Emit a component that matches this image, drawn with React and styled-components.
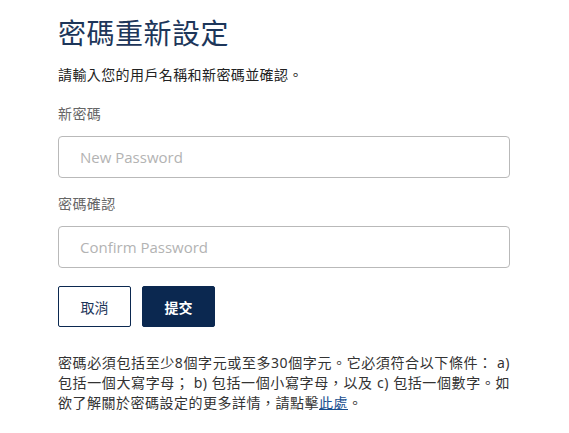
import React from "react";
import styled, { createGlobalStyle } from "styled-components";

const GlobalStyle = createGlobalStyle`
  body {
    margin: 0;
    background: #fff;
    font-family: "Noto Sans", "Noto Sans CJK TC", sans-serif;
  }
`;

const Page = styled.div`
  width: 452px;
  padding: 16px 0 0 58px;
`;

const Title = styled.h1`
  margin: 0;
  font-size: 28px;
  font-weight: 400;
  line-height: 34px;
  letter-spacing: 0.5px;
  color: #1d365a;
`;

const Intro = styled.p`
  margin: 15px 0 0;
  font-size: 14px;
  line-height: 20px;
  letter-spacing: 0.4px;
  color: #222;
`;

const Field = styled.div`
  display: flex;
  flex-direction: column;
  margin-top: ${(p) => p.$top}px;
`;

const Label = styled.label`
  font-size: 14px;
  line-height: 20px;
  letter-spacing: 0.4px;
  color: #666;
`;

const Input = styled.input`
  box-sizing: border-box;
  margin-top: 12px;
  width: 452px;
  height: 42px;
  padding: 0 21px;
  border: 1px solid #b9b9b9;
  border-radius: 4px;
  font-family: "Open Sans", "Noto Sans CJK TC", sans-serif;
  font-size: 15px;
  color: #333;
  outline: none;

  &::placeholder {
    color: #b3b3b3;
  }
`;

const Actions = styled.div`
  display: flex;
  gap: 11px;
  margin-top: 18px;
`;

const Button = styled.button`
  box-sizing: border-box;
  width: 73px;
  height: 41px;
  border-radius: 2px;
  border: 1px solid #0b2850;
  background: ${(p) => (p.$primary ? "#0b2850" : "#fff")};
  color: ${(p) => (p.$primary ? "#fff" : "#1d365a")};
  font-family: "Noto Sans CJK TC", sans-serif;
  font-size: 14px;
  font-weight: ${(p) => (p.$primary ? 700 : 400)};
  cursor: pointer;
`;

const Note = styled.p`
  margin: 26px 0 0;
  font-size: 14px;
  line-height: 20px;
  letter-spacing: 0.5px;
  text-align: justify;
  color: #333;
`;

const Link = styled.a`
  color: #1a4f8f;
  text-decoration: underline;
`;

export default function App() {
  return (
    <>
      <GlobalStyle />
      <Page>
        <Title>密碼重新設定</Title>
        <Intro>請輸入您的用戶名稱和新密碼並確認。</Intro>
        <Field $top={19}>
          <Label>新密碼</Label>
          <Input type="password" placeholder="New Password" />
        </Field>
        <Field $top={16}>
          <Label>密碼確認</Label>
          <Input type="password" placeholder="Confirm Password" />
        </Field>
        <Actions>
          <Button>取消</Button>
          <Button $primary>提交</Button>
        </Actions>
        <Note>
          密碼必須包括至少8個字元或至多30個字元。它必須符合以下條件： a)
          包括一個大寫字母； b) 包括一個小寫字母，以及 c) 包括一個數字。如欲了解關於密碼設定的更多詳情，請點擊
          <Link href="#">此處</Link>。
        </Note>
      </Page>
    </>
  );
}
